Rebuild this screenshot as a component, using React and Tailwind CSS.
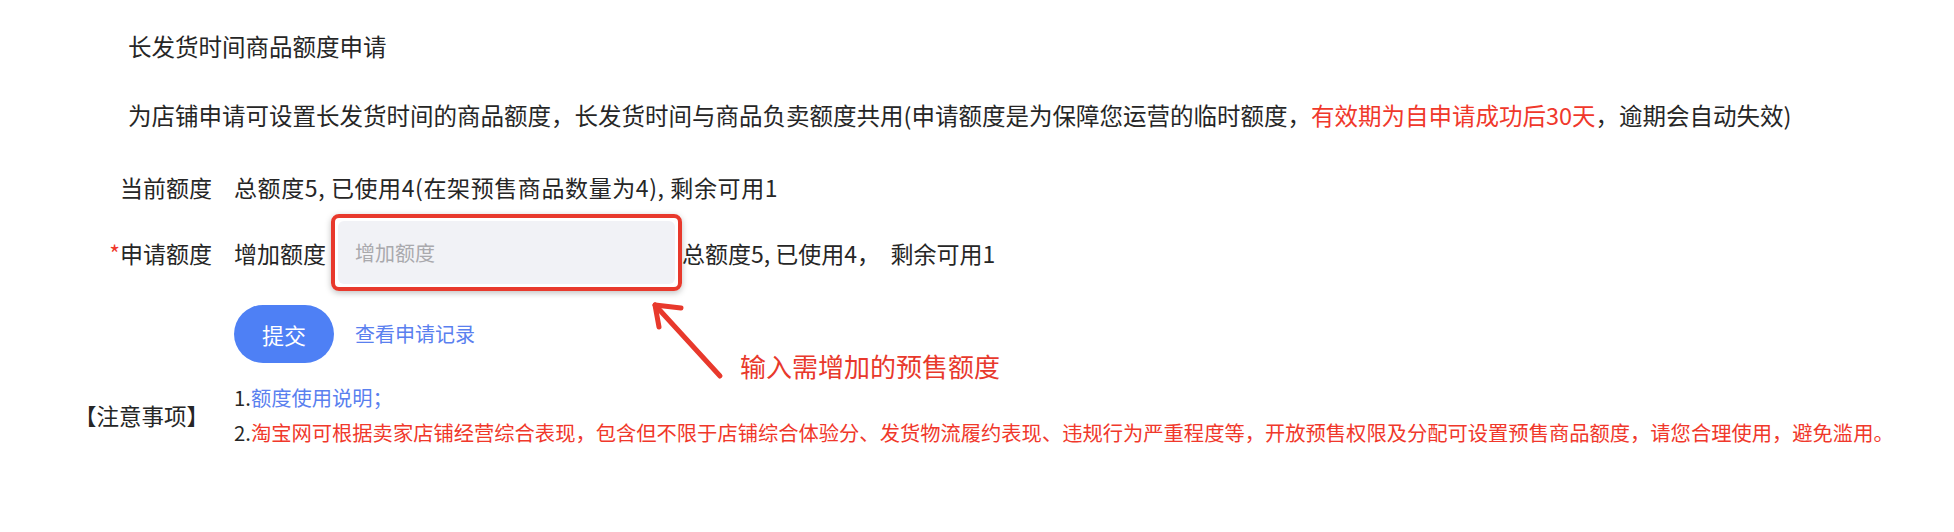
import React from "react";

const FormRow = ({ label, required, children, className = "" }) => (
  <div className={`flex items-center ${className}`}>
    <div className="w-[212px] shrink-0 text-right">
      {required && <span className="text-[#f0382b]">*</span>}
      {label}
    </div>
    <div className="ml-[22px] flex items-center">{children}</div>
  </div>
);

const App = () => {
  return (
    <div className="relative h-[532px] w-[1954px] bg-white font-['Noto_Sans_CJK_SC','Noto_Sans',sans-serif] text-[23px] leading-[28px] text-[#262626]">
      <div className="pt-[32px] pl-[128px] text-[23.5px]">长发货时间商品额度申请</div>

      <div className="mt-[41px] pl-[128px] text-[23.5px]">
        为店铺申请可设置长发货时间的商品额度，长发货时间与商品负卖额度共用(申请额度是为保障您运营的临时额度，
        <span className="text-[#f0382b]">有效期为自申请成功后30天</span>
        ，逾期会自动失效)
      </div>

      <FormRow label="当前额度" className="mt-[44px]">
        <span className="tracking-[0.6px]">总额度5, 已使用4(在架预售商品数量为4), 剩余可用1</span>
      </FormRow>

      {/* 申请额度 with highlighted input */}
      <FormRow label="申请额度" required className="mt-[13px]">
        <span>增加额度</span>
        <div className="ml-[5px] w-[351px] rounded-[8px] border-[4px] border-[#e8392c] p-[3px] shadow-[0_2px_6px_rgba(0,0,0,0.25)]">
          <input
            type="text"
            placeholder="增加额度"
            className="h-[63px] w-full rounded-[6px] bg-[#f1f2f6] pl-[17px] text-[20px] outline-none placeholder:text-[#a9a9ad]"
          />
        </div>
        <span className="whitespace-pre">总额度5, 已使用4，  剩余可用1</span>
      </FormRow>

      <div className="mt-[14px] flex items-center pl-[234px]">
        <button className="h-[58px] w-[100px] rounded-full bg-[#4e80f5] text-[22px] text-white">
          提交
        </button>
        <a className="ml-[21px] text-[20px] text-[#5a80ef]">查看申请记录</a>
      </div>

      {/* 注意事项 */}
      <div className="mt-[17px] flex items-center text-[20.3px] leading-[35px]">
        <div className="w-[234px] shrink-0 pl-[74px] text-[22.5px]">【注意事项】</div>
        <div>
          <div>
            1.<span className="text-[#5a80ef]">额度使用说明；</span>
          </div>
          <div>
            2.
            <span className="text-[#f0382b]">
              淘宝网可根据卖家店铺经营综合表现，包含但不限于店铺综合体验分、发货物流履约表现、违规行为严重程度等，开放预售权限及分配可设置预售商品额度，请您合理使用，避免滥用。
            </span>
          </div>
        </div>
      </div>

      {/* annotation arrow + label */}
      <svg className="absolute left-0 top-0" width="1954" height="532" fill="none">
        <g stroke="#e8392c" strokeWidth="5" strokeLinecap="round" strokeLinejoin="round">
          <path d="M720 376 L655 305" />
          <path d="M681 308 L655 305 L659 327" />
        </g>
      </svg>
      <div className="absolute left-[740px] top-[351px] text-[26px] leading-[30px] text-[#e8392c]">
        输入需增加的预售额度
      </div>
    </div>
  );
};

export default App;
